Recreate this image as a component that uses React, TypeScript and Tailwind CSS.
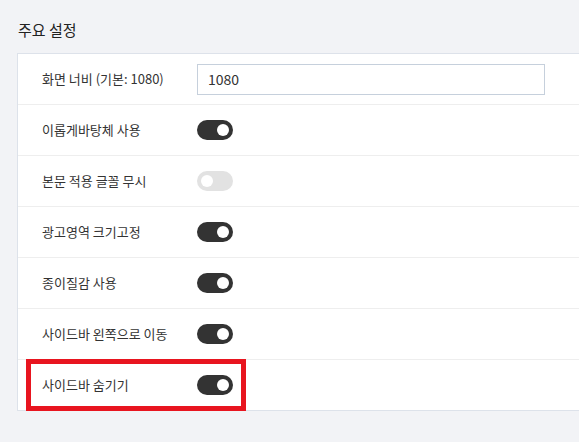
import React from 'react';

const font = { fontFamily: '"Noto Sans CJK KR", "Noto Sans", sans-serif' };

function Toggle({ on }: { on: boolean }) {
  return (
    <div
      className={`w-[36px] h-[20px] rounded-full flex items-center px-[4px] ${
        on ? 'bg-[#333333] justify-end' : 'bg-[#e2e2e2] justify-start'
      }`}
    >
      <div className="w-[12px] h-[12px] rounded-full bg-white" />
    </div>
  );
}

const rows: { label: string; on: boolean; highlight?: boolean }[] = [
  { label: '이롭게바탕체 사용', on: true },
  { label: '본문 적용 글꼴 무시', on: false },
  { label: '광고영역 크기고정', on: true },
  { label: '종이질감 사용', on: true },
  { label: '사이드바 왼쪽으로 이동', on: true },
  { label: '사이드바 숨기기', on: true, highlight: true },
];

export default function App() {
  return (
    <div className="w-[579px] h-[442px] bg-[#f2f3f6] overflow-hidden pt-[18px]" style={font}>
      <h2 className="pl-[18px] text-[15px] leading-[24px] text-[#222] mb-[11px]">주요 설정</h2>
      <div className="ml-[17px] w-[600px] bg-white border-l border-t border-b border-[#dde2ea]">
        <div className="h-[51px] flex items-center border-b border-[#eeeeee]">
          <div className="w-[179px] pl-[24px] text-[13px] text-[#333]">화면 너비 (기본: 1080)</div>
          <input
            defaultValue="1080"
            className="w-[348px] h-[31px] border border-[#c6d0dc] px-[10px] text-[14px] text-[#333] outline-none"
            style={font}
          />
        </div>
        {rows.map((r, i) => {
          const last = i === rows.length - 1;
          return (
            <div
              key={r.label}
              className={`relative flex items-center ${last ? 'h-[50px]' : 'h-[51px] border-b border-[#eeeeee]'}`}
            >
              <div className="w-[179px] pl-[24px] text-[13px] text-[#333]">{r.label}</div>
              <Toggle on={r.on} />
              {r.highlight && (
                <div className="absolute left-[8px] -top-[1px] w-[220px] h-[52px] border-[5px] border-[#e8151f]" />
              )}
            </div>
          );
        })}
      </div>
    </div>
  );
}
